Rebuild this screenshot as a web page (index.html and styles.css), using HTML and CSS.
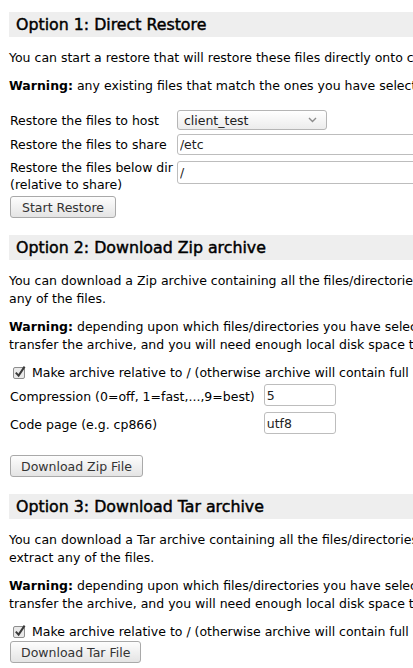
FILE: index.html
```html
<!DOCTYPE html>
<html>
<head>
<meta charset="utf-8">
<title>Restore Options</title>
<link rel="stylesheet" href="styles.css">
</head>
<body>
<div class="page">

<div class="h1 first">Option 1: Direct Restore</div>
<p>You can start a restore that will restore these files directly onto client_test.</p>
<p><b>Warning:</b> any existing files that match the ones you have selected will be overwritten!</p>
<table class="form restore">
<tr>
  <td class="mid">Restore the files to host</td>
  <td class="mid">
    <span class="selwrap">
      <select class="sel"><option>client_test</option></select>
      <svg class="chev" width="9" height="6" viewBox="0 0 9 6"><path d="M1 1 L4.5 4.5 L8 1" fill="none" stroke="#8c8c8c" stroke-width="1.4"/></svg>
    </span>
  </td>
</tr>
<tr>
  <td class="mid">Restore the files to share</td>
  <td class="mid"><input class="txt wide" type="text" value="/etc"></td>
</tr>
<tr>
  <td class="top">Restore the files below dir<br>(relative to share)</td>
  <td class="top"><input class="txt wide dir" type="text" value="/"></td>
</tr>
</table>
<button class="btn wide-btn">Start Restore</button>

<div class="h1">Option 2: Download Zip archive</div>
<p>You can download a Zip archive containing all the files/directories you have selected. You can then use a local application, such as WinZip, to view or extract any of the files.</p>
<p><b>Warning:</b> depending upon which files/directories you have selected, this archive might be very very large. It might take many minutes to create and transfer the archive, and you will need enough local disk space to store it.</p>
<div class="chkline"><label class="chk"><svg class="cb" width="14" height="14" viewBox="0 0 14 14"><rect x="0.5" y="2.5" width="11" height="11" rx="1.5" fill="#e9e9e9" stroke="#8e8e8e"/><path d="M2.8 7.6 L5.6 10.6 L11.6 1.6" fill="none" stroke="#3a3a3a" stroke-width="2"/></svg> Make archive relative to / (otherwise archive will contain full paths).</label></div>
<table class="form opts">
<tr>
  <td class="mid lbl">Compression (0=off, 1=fast,...,9=best)</td>
  <td class="mid"><input class="txt small" type="text" value="5"></td>
</tr>
<tr>
  <td class="mid lbl">Code page (e.g. cp866)</td>
  <td class="mid"><input class="txt small" type="text" value="utf8"></td>
</tr>
</table>
<button class="btn after-table">Download Zip File</button>

<div class="h1">Option 3: Download Tar archive</div>
<p>You can download a Tar archive containing all the files/directories you have selected. You can then use a local application, such as tar or WinZip to view or extract any of the files.</p>
<p><b>Warning:</b> depending upon which files/directories you have selected, this archive might be very very large. It might take many minutes to create and transfer the archive, and you will need enough local disk space to store it.</p>
<div class="chkline"><label class="chk"><svg class="cb" width="14" height="14" viewBox="0 0 14 14"><rect x="0.5" y="2.5" width="11" height="11" rx="1.5" fill="#e9e9e9" stroke="#8e8e8e"/><path d="M2.8 7.6 L5.6 10.6 L11.6 1.6" fill="none" stroke="#3a3a3a" stroke-width="2"/></svg> Make archive relative to / (otherwise archive will contain full paths).</label></div>
<button class="btn">Download Tar File</button>

</div>
</body>
</html>
```
FILE: styles.css
```css
html{overflow:hidden;}
body{margin:0;font-family:"DejaVu Sans",Verdana,sans-serif;font-size:12.5px;line-height:18px;color:#000;background:#fff;}
.page{width:987px;padding:12px 0 0 9px;}
.h1{background:#eeeeee;font-weight:normal;font-size:15.8px;line-height:19px;padding:3px 7px;margin:17px 0 12px 0;color:#000;-webkit-text-stroke:0.45px #000;}
.h1.first{margin-top:0;}
p{margin:10px 0;}
table.form{border-collapse:separate;border-spacing:0;margin:0;}
table.restore{margin-top:12px;border-spacing:0 2px;}
table.restore td{padding:1px;line-height:17px;}
table.opts{margin-top:2px;}
table.opts td{padding:0 1px 6px 1px;}
table.opts td.lbl{padding-top:4px;}
td{font-size:12.5px;}
td.mid{vertical-align:middle;}
td.top{vertical-align:top;}
.selwrap{position:relative;display:inline-block;margin-left:2px;vertical-align:middle;}
.sel{appearance:none;-webkit-appearance:none;width:150px;height:20px;border:1px solid #b5b5b5;border-radius:3px;background:linear-gradient(#ffffff,#ececec);font-family:"DejaVu Sans",sans-serif;font-size:12.5px;color:#222;padding:0 0 0 6px;margin:0;display:block;}
.chev{position:absolute;right:10px;top:7px;}
.txt{box-sizing:border-box;border:1px solid #bdbdbd;border-radius:3px;font-family:"DejaVu Sans",sans-serif;font-size:12.5px;color:#222;padding:0 2px;margin:0;background:#fff;vertical-align:middle;}
.txt.wide{width:320px;height:21px;margin-left:2px;}
.txt.dir{margin-top:2px;height:23px;}
.txt.small{width:72px;height:22px;margin-left:7px;}
.chkline{height:18px;}
.chk{display:inline-flex;align-items:center;padding-left:4px;}
.cb{margin-right:5px;position:relative;top:-1px;}
.btn{box-sizing:border-box;height:22px;padding:0 10px;border:1px solid #a9a9a9;border-radius:3px;background:linear-gradient(#fdfdfd,#e4e4e4);font-family:"DejaVu Sans",sans-serif;font-size:12.5px;color:#333;margin:0 0 0 1px;display:block;}
.btn.wide-btn{padding:0 11px;}
.btn.after-table{margin-top:15px;}
```
